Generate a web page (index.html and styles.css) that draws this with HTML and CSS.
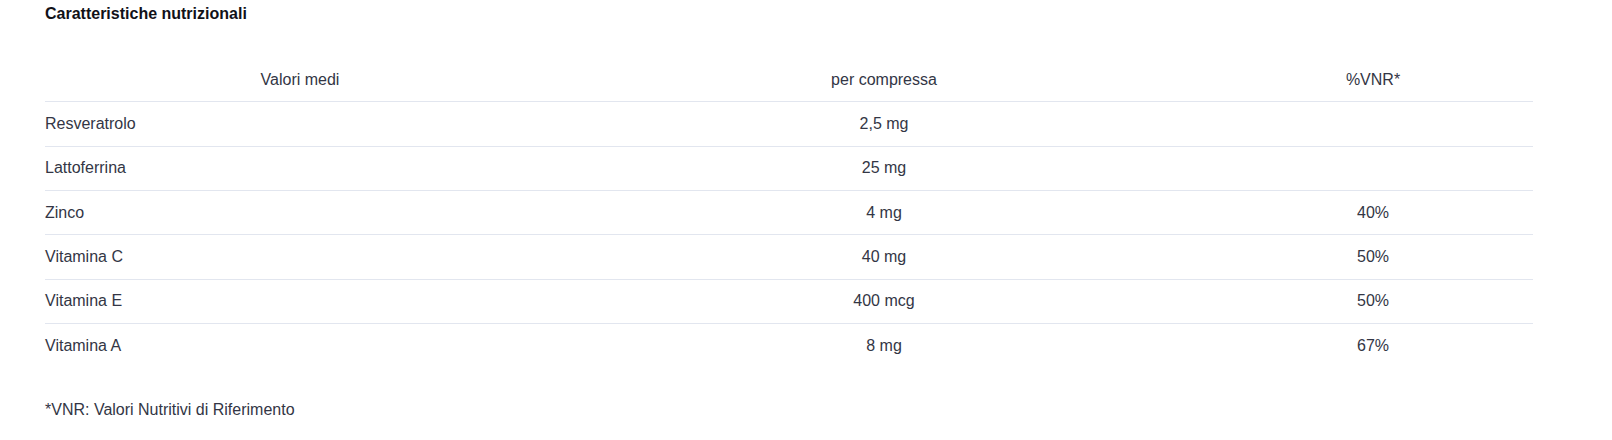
FILE: index.html
```html
<!DOCTYPE html>
<html lang="it">
<head>
<meta charset="utf-8">
<title>Caratteristiche nutrizionali</title>
<link rel="stylesheet" href="styles.css">
</head>
<body>
<section class="nutrition">
  <h3 class="nutrition-title">Caratteristiche nutrizionali</h3>
  <table class="nutrition-table">
    <colgroup>
      <col class="col-name">
      <col class="col-amount">
      <col class="col-vnr">
    </colgroup>
    <thead>
      <tr>
        <th>Valori medi</th>
        <th>per compressa</th>
        <th>%VNR*</th>
      </tr>
    </thead>
    <tbody>
      <tr><td>Resveratrolo</td><td>2,5 mg</td><td></td></tr>
      <tr><td>Lattoferrina</td><td>25 mg</td><td></td></tr>
      <tr><td>Zinco</td><td>4 mg</td><td>40%</td></tr>
      <tr><td>Vitamina C</td><td>40 mg</td><td>50%</td></tr>
      <tr><td>Vitamina E</td><td>400 mcg</td><td>50%</td></tr>
      <tr><td>Vitamina A</td><td>8 mg</td><td>67%</td></tr>
    </tbody>
  </table>
  <p class="nutrition-note">*VNR: Valori Nutritivi di Riferimento</p>
</section>
</body>
</html>
```
FILE: styles.css
```css
html, body {
  margin: 0;
  padding: 0;
  background: #ffffff;
}

body {
  font-family: "Liberation Sans", Arial, sans-serif;
  font-size: 16px;
  color: #333645;
}

.nutrition {
  padding: 2px 79px 0 45px;
}

.nutrition-title {
  margin: 0;
  font-size: 16px;
  line-height: 24px;
  font-weight: 700;
  color: #111118;
}

.nutrition-table {
  width: 100%;
  margin-top: 32px;
  border-collapse: collapse;
  table-layout: fixed;
}

.col-name { width: 510px; }
.col-amount { width: 658px; }
.col-vnr { width: auto; }

.nutrition-table th,
.nutrition-table td {
  padding: 9.66px 0;
  line-height: 24px;
  font-weight: 400;
  text-align: center;
  vertical-align: middle;
}

.nutrition-table thead th {
  border-bottom: 1px solid #e2e6ef;
}

.nutrition-table tbody tr + tr td {
  border-top: 1px solid #e2e6ef;
}

.nutrition-table tbody td:first-child {
  text-align: left;
}

.nutrition-note {
  margin: 31px 0 0;
  line-height: 24px;
}
```
